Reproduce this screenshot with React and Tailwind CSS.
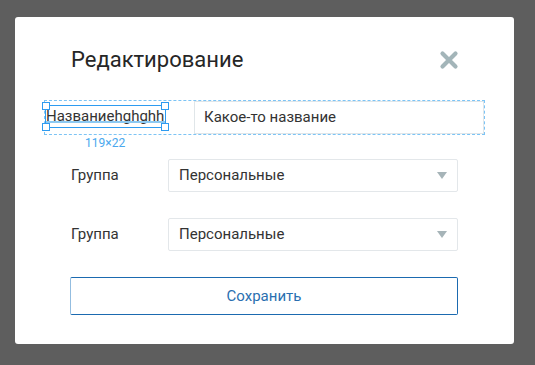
import React from "react";

function CloseIcon() {
  return (
    <svg width="20" height="20" viewBox="0 0 20 20" fill="none">
      <path
        d="M3.5 3.5L16.5 16.5M16.5 3.5L3.5 16.5"
        stroke="#a3b5b9"
        strokeWidth="4.2"
        strokeLinecap="round"
      />
    </svg>
  );
}

function Caret() {
  return (
    <svg width="10" height="7" viewBox="0 0 10 7">
      <polygon points="0,0 10,0 5,7" fill="#a6b4b8" />
    </svg>
  );
}

function Handle({ className }) {
  return (
    <span
      className={`absolute w-[8px] h-[8px] bg-white border border-[#2e9bf0] ${className}`}
    />
  );
}

function SelectRow({ label, value }) {
  return (
    <div className="flex items-center">
      <span className="w-[97px] text-[15px] text-[#333]">{label}</span>
      <div className="flex items-center justify-between w-[290px] h-[33px] pl-[10px] pr-[10px] border border-[#e3e7ea] rounded-[2px] text-[15px] text-[#333]">
        <span>{value}</span>
        <Caret />
      </div>
    </div>
  );
}

export default function App() {
  return (
    <div
      className="w-[535px] h-[365px] bg-[#5e5e5e] pt-[17px] pl-[15px]"
      style={{ fontFamily: "Roboto, 'Noto Sans', sans-serif" }}
    >
      <div className="w-[499px] h-[327px] bg-white rounded-[3px] pt-[30px]">
        <div className="flex items-center justify-between h-[26px] pl-[56px] pr-[55px]">
          <h1 className="text-[22px] leading-[26px] text-[#262626]">Редактирование</h1>
          <CloseIcon />
        </div>

        <div className="relative ml-[29px] mt-[27px] w-[441px] h-[35px] border border-dashed border-[#7cc4f5] flex">
          <div className="relative w-[149px] h-full">
            <div className="absolute left-0 top-[4px] w-[121px] h-[23px] border border-[#2e9bf0]">
              <span className="absolute left-0 top-[1px] text-[15px] leading-[19px] text-[#333] whitespace-nowrap">
                Названиеhghghh
              </span>
              <span className="absolute left-0 right-0 top-[15px] h-[2px] bg-[#8cc9f2]" />
              <Handle className="-left-[4px] -top-[4px]" />
              <Handle className="-right-[4px] -top-[4px]" />
              <Handle className="-left-[4px] -bottom-[4px]" />
              <Handle className="-right-[4px] -bottom-[4px]" />
            </div>
            <span className="absolute left-[40px] top-[36px] text-[12px] leading-[12px] text-[#4aa8ee] whitespace-nowrap">
              119×22
            </span>
          </div>
          <div className="flex-1 h-[33px] border border-[#e0e6e9] flex items-center pl-[9px] text-[15px] text-[#333]">
            Какое-то название
          </div>
        </div>

        <div className="pl-[56px] mt-[24px] flex flex-col gap-[26px]">
          <SelectRow label="Группа" value="Персональные" />
          <SelectRow label="Группа" value="Персональные" />
        </div>

        <div className="pl-[55px] mt-[26px]">
          <button className="w-[388px] h-[38px] border border-[#1b6ab0] border-l-[#93bde0] rounded-[2px] bg-white text-[15px] text-[#2a6fb0]">
            Сохранить
          </button>
        </div>
      </div>
    </div>
  );
}
